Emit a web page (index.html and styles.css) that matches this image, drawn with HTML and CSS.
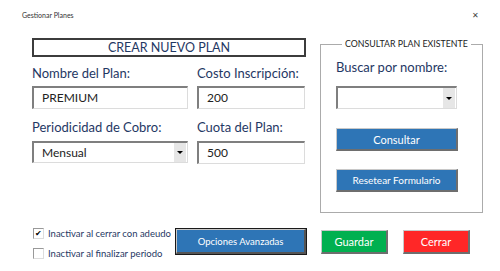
FILE: index.html
```html
<!DOCTYPE html>
<html>
	<head>
		<meta charset="utf-8" />
		<title>Gestionar Planes</title>
		<link rel="stylesheet" href="styles.css">
	</head>
	<body>
		<div class="window">
			<div class="titlebar">
				<span class="title">Gestionar Planes</span>
				<span class="close">&#x2715;</span>
			</div>
			<div class="main">
				<div class="create">
					<div class="create_title">CREAR NUEVO PLAN</div>
					<div class="fields">
						<div class="label row1">Nombre del Plan:</div>
						<div class="label row1">Costo Inscripción:</div>
						<div class="box">PREMIUM</div>
						<div class="box">200</div>
						<div class="label row2">Periodicidad de Cobro:</div>
						<div class="label row2">Cuota del Plan:</div>
						<div class="box combo">Mensual<span class="arrow"><i></i></span></div>
						<div class="box">500</div>
					</div>
				</div>
				<fieldset class="consult">
					<legend>CONSULTAR PLAN EXISTENTE</legend>
					<div class="label search_label">Buscar por nombre:</div>
					<div class="box combo search_box"><span class="arrow"><i></i></span></div>
					<div class="btn blue consult_btn">Consultar</div>
					<div class="btn blue reset_btn">Resetear Formulario</div>
				</fieldset>
			</div>
			<div class="footer">
				<div class="checks">
					<div class="check"><span class="tick on">&#x2714;</span>Inactivar al cerrar con adeudo</div>
					<div class="check"><span class="tick"></span>Inactivar al finalizar periodo</div>
				</div>
				<div class="btn blue advanced">Opciones Avanzadas</div>
				<div class="btn green">Guardar</div>
				<div class="btn red">Cerrar</div>
			</div>
		</div>
	</body>
</html>
```

FILE: styles.css
```css
*{margin: 0;padding: 0;box-sizing: border-box;}
body{background: #fff;font-family: "Lato", "Open Sans", sans-serif;}
.window{width: 500px;height: 271px;position: relative;}
.titlebar{height: 38px;display: flex;justify-content: space-between;padding: 10px 21px 0 22px;}
.titlebar .title{font-size: 7px;color: #333;line-height: 10px;}
.titlebar .close{font-size: 8px;color: #444;line-height: 10px;}
.main{display: flex;gap: 14px;padding-left: 32px;height: 175px;}
.create{width: 274px;}
.create_title{height: 19px;border: 2px solid #3c3c3c;text-align: center;color: #1f3864;font-size: 12.5px;line-height: 15px;}
.fields{display: grid;grid-template-columns: 156px 108px;column-gap: 9px;}
.label{color: #1f3864;font-size: 13px;line-height: 15px;}
.row1{height: 29px;padding-top: 9px;}
.row2{height: 32px;padding-top: 11px;}
.box{height: 23px;background: #fff;border-top: 2px solid #7f7f7f;border-left: 2px solid #7f7f7f;border-right: 1px solid #dcdcdc;border-bottom: 1px solid #dcdcdc;padding-left: 8px;font-size: 12px;line-height: 20px;color: #222;position: relative;}
.combo{height: 22px;}
.combo .arrow{position: absolute;right: 1px;top: 0;bottom: 0;width: 12px;background: #e6e6e6;display: flex;align-items: center;justify-content: center;}
.combo .arrow i{width: 0;height: 0;border-left: 3px solid transparent;border-right: 3px solid transparent;border-top: 3px solid #000;}
.consult{width: 149px;border: 1px solid #ababab;padding: 0 11px 19px 15px;margin-top: 0;}
.consult legend{font-size: 8.8px;line-height: 12px;color: #222;margin-left: 6px;padding: 0 3px;white-space: nowrap;}
.search_label{margin-top: 10px;}
.search_box{width: 121px;height: 23px;margin-top: 11px;}
.btn{display: flex;align-items: center;justify-content: center;color: #fff;font-size: 11px;border-top: 1px solid #c8c8c8;border-left: 1px solid #c8c8c8;border-right: 2px solid #6e6e6e;border-bottom: 2px solid #6e6e6e;}
.blue{background: #2e75b6;}
.green{background: #00b050;}
.red{background: #ff2727;}
.consult_btn{width: 122px;height: 23px;margin-top: 19px;font-size: 11px;}
.reset_btn{width: 122px;height: 23px;margin-top: 18px;font-size: 10px;}
.footer{display: flex;padding-left: 33px;margin-top: 15px;}
.checks{width: 143px;}
.check{display: flex;align-items: center;height: 10px;margin-bottom: 10px;font-size: 9.5px;color: #1f3864;}
.tick{width: 11px;height: 11px;border: 1px solid #999;border-right-color: #ddd;border-bottom-color: #ddd;margin-right: 4px;font-size: 8px;line-height: 9px;text-align: center;color: #000;}
.advanced{width: 130px;height: 25px;margin-top: 1px;outline: 1px solid #1a1a1a;border: 1px solid #c8c8c8;border-right: 2px solid #555;border-bottom: 2px solid #555;font-size: 9.5px;}
.green, .red{width: 67px;height: 24px;margin-top: 2px;font-size: 11px;}
.green{margin-left: 15px;}
.red{margin-left: 15px;}
```
